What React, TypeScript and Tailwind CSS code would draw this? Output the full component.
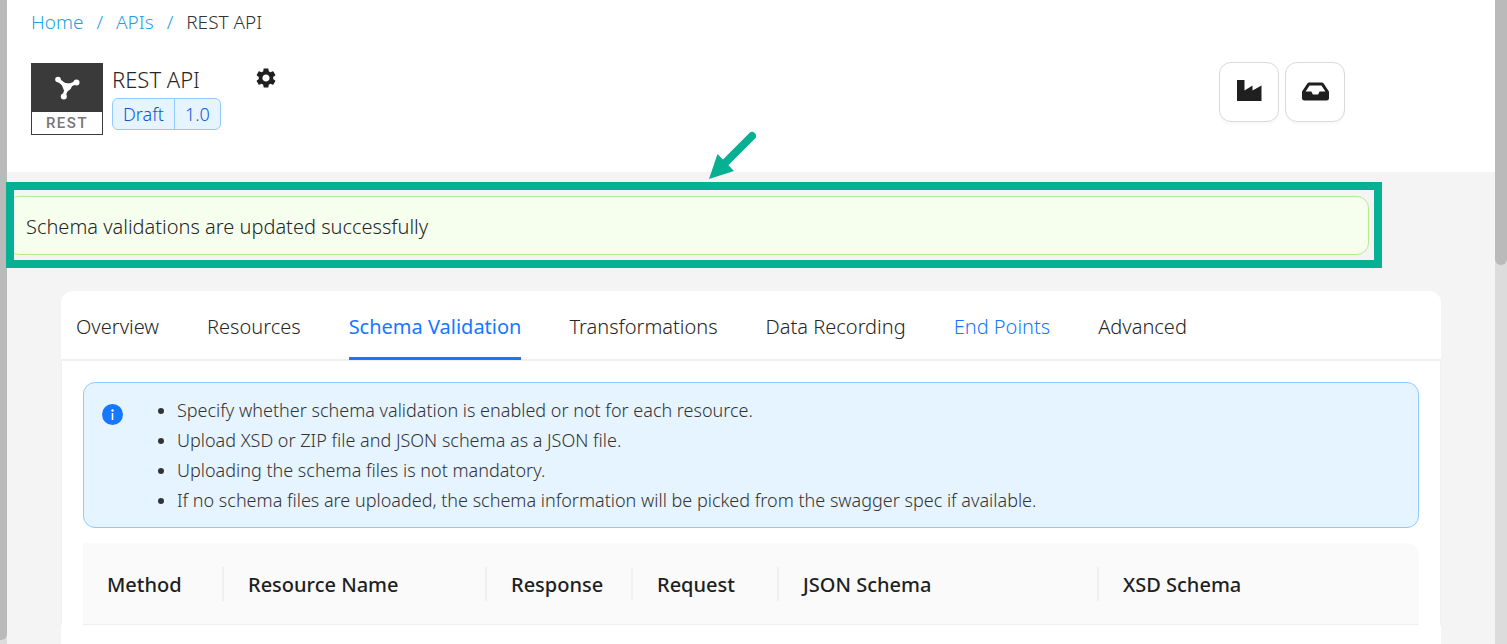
import React from "react";
import { FaInbox } from "react-icons/fa";
import { MdSettings } from "react-icons/md";

const TABS = [
	{ label: "Overview" },
	{ label: "Resources" },
	{ label: "Schema Validation", active: true },
	{ label: "Transformations" },
	{ label: "Data Recording" },
	{ label: "End Points", hovered: true },
	{ label: "Advanced" },
];

const NOTES = [
	"Specify whether schema validation is enabled or not for each resource.",
	"Upload XSD or ZIP file and JSON schema as a JSON file.",
	"Uploading the schema files is not mandatory.",
	"If no schema files are uploaded, the schema information will be picked from the swagger spec if available.",
];

const COLUMNS = [
	{ label: "Method", width: "w-[141px]" },
	{ label: "Resource Name", width: "w-[263px]" },
	{ label: "Response", width: "w-[146px]" },
	{ label: "Request", width: "w-[146px]" },
	{ label: "JSON Schema", width: "w-80" },
	{ label: "XSD Schema", width: "w-80" },
];

function RestLogo() {
	return (
		<div className="w-18 h-18 flex flex-col border border-[#3a3a3a] bg-[#3a3a3a]">
			<div className="flex-1 flex items-center justify-center">
				<svg className="w-[26px] h-[26px]" viewBox="0 0 26 26" fill="#fff" stroke="#fff" aria-hidden="true">
					<path d="M4 5 13 11.500 22 7.500M13 12 10 21" fill="none" strokeWidth="3.400" />
					<path d="M8 8.500 18 9.500 16 13.500 11.500 17Z" strokeWidth="1.500" />
					<circle cx="4" cy="4.500" r="2.800" stroke="none" />
					<circle cx="22.500" cy="7.500" r="3" stroke="none" />
					<circle cx="9.800" cy="21.500" r="3" stroke="none" />
				</svg>
			</div>
			<div className="h-[22px] bg-white text-center text-[15px] leading-[22px] tracking-widest font-medium text-[#777] font-['Roboto',sans-serif]">
				REST
			</div>
		</div>
	);
}

function FactoryIcon() {
	return (
		<svg className="w-7 h-7" viewBox="0 0 28 28" fill="currentColor" aria-hidden="true">
			<path d="M2 3h7.500v10.500L17.500 8.500v5L26.500 8.500V24H2Z" />
		</svg>
	);
}

function IconButton({ label, children }: { label: string; children: React.ReactNode }) {
	return (
		<button
			type="button"
			aria-label={label}
			className="w-15 h-15 flex items-center justify-center rounded-xl border border-[#d9d9d9] bg-white pb-[2px] shadow-[0_3px_0_rgba(0,0,0,0.02)]"
		>
			{children}
		</button>
	);
}

function Header() {
	return (
		<header className="h-43 shrink-0 bg-white pl-6 pr-[150px]">
			<nav className="flex gap-[13px] pt-2 text-[19px] leading-7 text-[#1f9fe5]" aria-label="Breadcrumb">
				<a href="#home">Home</a>
				<span>/</span>
				<a href="#apis">APIs</a>
				<span>/</span>
				<span className="text-[#333]">REST API</span>
			</nav>
			<div className="flex items-start pt-[26px]">
				<div className="flex pt-px">
					<RestLogo />
					<div className="ml-[9px] w-[142px]">
						<h1 className="h-[35px] text-[22px] leading-8">REST API</h1>
						<div className="inline-flex h-8 divide-x divide-[#91caff] rounded-md border border-[#91caff] bg-[#e6f4ff] text-lg leading-[30px] text-[#0958d9]">
							<span className="px-[10px]">Draft</span>
							<span className="px-[10px]">1.0</span>
						</div>
					</div>
				</div>
				<button type="button" aria-label="Settings" className="h-8 text-[#1f1f1f]">
					<MdSettings className="w-6 h-6" />
				</button>
				<div className="ml-auto flex gap-[6px] text-[#1f1f1f]">
					<IconButton label="Deploy">
						<FactoryIcon />
					</IconButton>
					<IconButton label="Inbox">
						<FaInbox className="w-[27px] h-[27px]" />
					</IconButton>
				</div>
			</div>
		</header>
	);
}

function SuccessAlert() {
	return (
		<div className="relative mt-6 mr-[126px] h-[59px] flex items-center rounded-xl border border-[#b7eb8f] bg-[#f6ffed] pt-[2px] pl-[18px] text-xl">
			Schema validations are updated successfully
			<div className="absolute -left-[2px] -right-[14px] -top-[15px] -bottom-[14px] border-8 border-[#06b092]" />
			<svg className="absolute left-[700px] -top-[66px] w-12 h-12" viewBox="0 0 48 48" aria-hidden="true">
				<path d="M44 5 18 31" stroke="#06b092" strokeWidth="8" strokeLinecap="round" />
				<path d="M1 48 9.500 23 26 40Z" fill="#06b092" />
			</svg>
		</div>
	);
}

function InfoNotes() {
	return (
		<div className="flex rounded-xl border border-[#91caff] bg-[#e6f4ff] py-3 pl-[18px]">
			<svg className="mt-[9px] w-[21px] h-[21px] shrink-0" viewBox="0 0 21 21" aria-hidden="true">
				<circle cx="10.500" cy="10.500" r="10.500" fill="#1677ff" />
				<circle cx="10.500" cy="6.500" r="1.200" fill="#fff" />
				<path d="M10.500 9v7" stroke="#fff" strokeWidth="1.600" />
			</svg>
			<ul className="ml-[54px] list-disc text-lg leading-[30px] text-[#333]">
				{NOTES.map((note) => (
					<li key={note}>{note}</li>
				))}
			</ul>
		</div>
	);
}

function SchemaTable() {
	return (
		<table className="mt-[15px] w-full table-fixed border-separate border-spacing-0 text-left">
			<thead>
				<tr>
					{COLUMNS.map((col, i) => (
						<th
							key={col.label}
							className={`${col.width} h-[82px] p-0 bg-[#fafafa] border-b border-[#f0f0f0] text-xl font-medium text-[#1f1f1f] last:rounded-tr-xl`}
						>
							<div
								className={`flex h-[34px] items-center pt-[2px] pl-6 ${i < COLUMNS.length - 1 ? "border-r-2 border-[#f0f0f0]" : ""}`}
							>
								{col.label}
							</div>
						</th>
					))}
				</tr>
			</thead>
		</table>
	);
}

export default function App() {
	return (
		<div className="flex h-screen overflow-hidden bg-[#f4f4f4] font-['Noto_Sans',sans-serif] font-light text-[#262626]">
			<div className="w-[7px] shrink-0 bg-[#dcdcdc] pb-1">
				<div className="h-full rounded-br-md bg-[#bababa]" />
			</div>
			<main className="flex min-w-0 flex-1 flex-col">
				<Header />
				<SuccessAlert />
				<section className="mx-[54px] mt-9 flex-1 rounded-t-xl bg-white">
					<div role="tablist" className="flex h-[70px] gap-12 border-b-2 border-[#f0f0f0] pl-[15px] text-xl">
						{TABS.map((tab) => (
							<button
								key={tab.label}
								type="button"
								role="tab"
								aria-selected={!!tab.active}
								className={`-mb-px border-b-[3px] pt-[6px] whitespace-nowrap ${
									tab.active
										? "border-[#1677ff] font-normal text-[#1677ff]"
										: tab.hovered
											? "border-transparent text-[#1677ff]"
											: "border-transparent"
								}`}
							>
								{tab.label}
							</button>
						))}
					</div>
					<div className="border-x border-[#f0f0f0] px-[21px] pt-[21px]">
						<InfoNotes />
						<SchemaTable />
					</div>
				</section>
			</main>
			<div className="w-3 shrink-0 bg-[#dcdcdc]">
				<div className="h-[265px] rounded-b-md bg-[#bababa]" />
			</div>
		</div>
	);
}
